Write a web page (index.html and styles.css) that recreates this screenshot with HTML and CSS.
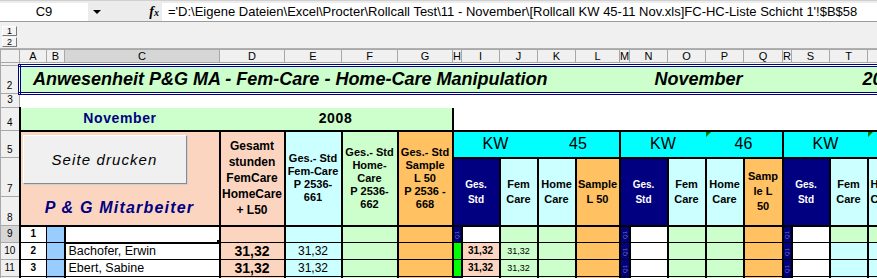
FILE: index.html
```html
<!DOCTYPE html>
<html lang="de">
<head>
  <meta charset="UTF-8" />
  <title>Anwesenheit P&amp;G MA - Rollcall</title>
  <link rel="stylesheet" href="styles.css">
</head>

<body>
  <div class="formula-bar">
    <div class="name-box">C9</div>
    <div class="name-drop">
      <span class="arrow"></span>
      <span class="fx"><i>f</i><small>x</small></span>
    </div>
    <div class="formula">='D:\Eigene Dateien\Excel\Procter\Rollcall Test\11 - November\[Rollcall KW 45-11 Nov.xls]FC-HC-Liste Schicht 1'!$B$58</div>
  </div>

  <div class="outline">
    <span class="level">1</span>
    <span class="level">2</span>
  </div>

  <table class="sheet">
    <colgroup>
      <col class="w-rh"><col class="w-a"><col class="w-b"><col class="w-c">
      <col class="w-d"><col class="w-e"><col class="w-f"><col class="w-g">
      <col class="w-h"><col class="w-i"><col class="w-i"><col class="w-i"><col class="w-l">
      <col class="w-m"><col class="w-i"><col class="w-i"><col class="w-i"><col class="w-q">
      <col class="w-h"><col class="w-i"><col class="w-i"><col class="w-u">
    </colgroup>

    <!-- column letters -->
    <tr class="r-hdr">
      <th class="rh"></th>
      <th class="ch">A</th><th class="ch">B</th><th class="ch sel">C</th><th class="ch">D</th>
      <th class="ch">E</th><th class="ch">F</th><th class="ch">G</th><th class="ch">H</th>
      <th class="ch">I</th><th class="ch">J</th><th class="ch">K</th><th class="ch">L</th>
      <th class="ch">M</th><th class="ch">N</th><th class="ch">O</th><th class="ch">P</th>
      <th class="ch">Q</th><th class="ch">R</th><th class="ch">S</th><th class="ch">T</th>
      <th class="ch">U</th>
    </tr>

    <tr class="r1">
      <th class="rh"></th>
      <td class="w"></td><td class="w"></td><td class="w"></td><td class="w"></td><td class="w"></td>
      <td class="w"></td><td class="w"></td><td class="w"></td><td class="w"></td><td class="w"></td>
      <td class="w"></td><td class="w"></td><td class="w"></td><td class="w"></td><td class="w"></td>
      <td class="w"></td><td class="w"></td><td class="w"></td><td class="w"></td><td class="w"></td>
      <td class="w"></td>
    </tr>

    <!-- title -->
    <tr class="r2">
      <th class="rh">2</th>
      <td class="title first" colspan="13"><span class="t-main">Anwesenheit P&amp;G MA - Fem-Care - Home-Care Manipulation</span></td>
      <td class="title" colspan="5"><span class="t-month">November</span></td>
      <td class="title" colspan="3"><span class="t-year">2008</span></td>
    </tr>

    <tr class="r3">
      <th class="rh">3</th>
      <td class="w"></td><td class="w"></td><td class="w"></td><td class="w"></td><td class="w"></td>
      <td class="w"></td><td class="w"></td><td class="w"></td><td class="w"></td><td class="w"></td>
      <td class="w"></td><td class="w"></td><td class="w"></td><td class="w"></td><td class="w"></td>
      <td class="w"></td><td class="w"></td><td class="w"></td><td class="w"></td><td class="w"></td>
      <td class="w"></td>
    </tr>

    <tr class="r4">
      <th class="rh">4</th>
      <td class="lg month" colspan="3">November</td>
      <td class="lg year" colspan="4">2008</td>
      <td class="w"></td><td class="w"></td><td class="w"></td><td class="w"></td><td class="w"></td>
      <td class="w"></td><td class="w"></td><td class="w"></td><td class="w"></td><td class="w"></td>
      <td class="w"></td><td class="w"></td><td class="w"></td><td class="w"></td>
    </tr>

    <!-- column headings -->
    <tr class="r5">
      <th class="rh">5</th>
      <td class="pe hd staff" colspan="3" rowspan="3">
        <div class="print-btn">Seite drucken</div>
        <div class="team">P &amp; G Mitarbeiter</div>
      </td>
      <td class="pe hd total" rowspan="3">Gesamt<br>stunden<br>FemCare<br>HomeCare<br>+ L50</td>
      <td class="lc hd sum" rowspan="3">Ges.- Std<br>Fem-Care<br>P 2536-<br>661</td>
      <td class="lg hd sum" rowspan="3">Ges.- Std<br>Home-<br>Care<br>P 2536-<br>662</td>
      <td class="or hd sum" rowspan="3">Ges.- Std<br>Sample<br>L 50<br>P 2536 -<br>668</td>
      <td class="cy hd kw" colspan="3">KW</td>
      <td class="cy hd kwn" colspan="2">45</td>
      <td class="cy hd kw" colspan="3">KW</td>
      <td class="cy hd kwn mark" colspan="2"><span class="tri"></span>46</td>
      <td class="cy hd kw" colspan="3">KW</td>
      <td class="cy hd kwn mark"><span class="tri"></span></td>
    </tr>

    <tr class="r7">
      <th class="rh">7</th>
      <td class="nv hd wk" colspan="2" rowspan="2">Ges.<br>Std</td>
      <td class="lc hd wk" rowspan="2">Fem<br>Care</td>
      <td class="lc hd wk" rowspan="2">Home<br>Care</td>
      <td class="or hd wk" rowspan="2">Sample<br>L 50</td>
      <td class="nv hd wk" colspan="2" rowspan="2">Ges.<br>Std</td>
      <td class="lc hd wk" rowspan="2">Fem<br>Care</td>
      <td class="lc hd wk" rowspan="2">Home<br>Care</td>
      <td class="or hd wk" rowspan="2">Samp<br>le L<br>50</td>
      <td class="nv hd wk" colspan="2" rowspan="2">Ges.<br>Std</td>
      <td class="lc hd wk" rowspan="2">Fem<br>Care</td>
      <td class="lc hd wk left" rowspan="2">Home<br>Care</td>
    </tr>

    <tr class="r8">
      <th class="rh">8</th>
    </tr>

    <!-- staff rows -->
    <tr class="data">
      <th class="rh sel">9</th>
      <td class="num">1</td>
      <td class="pb idx"></td>
      <td class="name active"><span class="handle"></span></td>
      <td class="pe"></td>
      <td class="lc"></td>
      <td class="lg"></td>
      <td class="or"></td>
      <td class="nv"><span class="tiny">Q1</span></td>
      <td class="white"></td>
      <td class="lg"></td><td class="lg"></td><td class="or"></td>
      <td class="nv"><span class="tiny">Q1</span></td>
      <td class="white"></td>
      <td class="lg"></td><td class="lg"></td><td class="or"></td>
      <td class="nv"><span class="tiny">Q1</span></td>
      <td class="white"></td>
      <td class="lg"></td><td class="lg"></td>
    </tr>

    <tr class="data">
      <th class="rh">10</th>
      <td class="num">2</td>
      <td class="pb idx"></td>
      <td class="name">Bachofer, Erwin</td>
      <td class="pe big">31,32</td>
      <td class="lc val">31,32</td>
      <td class="lg"></td>
      <td class="or"></td>
      <td class="gr"></td>
      <td class="pe small-b">31,32</td>
      <td class="lg small">31,32</td>
      <td class="lg"></td><td class="or"></td>
      <td class="nv"><span class="tiny">Q1</span></td>
      <td class="white"></td>
      <td class="lg"></td><td class="lg"></td><td class="or"></td>
      <td class="nv"><span class="tiny">Q1</span></td>
      <td class="white"></td>
      <td class="lc"></td><td class="lc"></td>
    </tr>

    <tr class="data">
      <th class="rh">11</th>
      <td class="num">3</td>
      <td class="pb idx"></td>
      <td class="name">Ebert, Sabine</td>
      <td class="pe big">31,32</td>
      <td class="lc val">31,32</td>
      <td class="lg"></td>
      <td class="or"></td>
      <td class="gr"></td>
      <td class="pe small-b">31,32</td>
      <td class="lg small">31,32</td>
      <td class="lg"></td><td class="or"></td>
      <td class="nv"><span class="tiny">Q1</span></td>
      <td class="white"></td>
      <td class="lg"></td><td class="lg"></td><td class="or"></td>
      <td class="nv"><span class="tiny">Q1</span></td>
      <td class="white"></td>
      <td class="lc"></td><td class="lc"></td>
    </tr>

    <tr class="data">
      <th class="rh">12</th>
      <td class="num">4</td>
      <td class="pb idx"></td>
      <td class="name"></td>
      <td class="pe"></td>
      <td class="lc"></td>
      <td class="lg"></td>
      <td class="or"></td>
      <td class="nv"></td>
      <td class="white"></td>
      <td class="lg"></td><td class="lg"></td><td class="or"></td>
      <td class="nv"></td>
      <td class="white"></td>
      <td class="lg"></td><td class="lg"></td><td class="or"></td>
      <td class="nv"></td>
      <td class="white"></td>
      <td class="lc"></td><td class="lc"></td>
    </tr>
  </table>
</body>
</html>
```

FILE: styles.css
```css
* {
  box-sizing: border-box;
}

body {
  margin: 0;
  width: 877px;
  height: 278px;
  overflow: hidden;
  font-family: "Liberation Sans", Arial, sans-serif;
  background-color: #fff;
  color: #000;
}

/* formula bar */

.formula-bar {
  display: flex;
  height: 22px;
  padding-top: 2px;
  background-color: #ececec;
  border-top: 1px solid #d0d0d0;
  border-bottom: 1px solid #9c9c9c;
}

.name-box {
  width: 88px;
  background-color: #fff;
  font-size: 13px;
  line-height: 18px;
  text-align: center;
}

.name-drop {
  width: 74px;
  display: flex;
  align-items: center;
  padding-left: 5px;
}

.arrow {
  width: 0;
  height: 0;
  border-left: 4px solid transparent;
  border-right: 4px solid transparent;
  border-top: 4px solid #000;
}

.fx {
  margin-left: auto;
  margin-right: 3px;
  font-family: "Liberation Serif", serif;
  font-size: 14px;
  font-weight: bold;
}

.fx small {
  font-size: 10px;
  font-style: italic;
}

.formula {
  flex: 1;
  background-color: #fff;
  padding-left: 6px;
  font-size: 13px;
  line-height: 18px;
  white-space: nowrap;
  overflow: hidden;
}

/* outline gutter */

.outline {
  height: 27px;
  padding: 4px 0 0 2px;
  background-color: #f0f0f0;
  border-bottom: 1px solid #b0b0b0;
}

.level {
  display: block;
  width: 15px;
  height: 10px;
  margin-bottom: 1px;
  font-size: 9px;
  line-height: 9px;
  text-align: center;
  background-color: #f4f4f4;
  border: 1px solid;
  border-color: #fff #7a7a7a #7a7a7a #fff;
}

/* sheet */

.sheet {
  border-collapse: collapse;
  table-layout: fixed;
  width: 927px;
  line-height: 1.15;
}

.sheet td,
.sheet th {
  padding: 0;
  border: none;
  overflow: hidden;
  white-space: nowrap;
  text-align: center;
  vertical-align: middle;
}

.sheet th {
  font-weight: normal;
}

.w-rh { width: 19px; }
.w-a { width: 27px; }
.w-b { width: 18px; }
.w-c { width: 155px; }
.w-d { width: 65px; }
.w-e { width: 57px; }
.w-f { width: 56px; }
.w-g { width: 55px; }
.w-h { width: 9px; }
.w-i { width: 38px; }
.w-l { width: 44px; }
.w-m { width: 10px; }
.w-q { width: 39px; }
.w-u { width: 60px; }

.r-hdr { height: 13px; }
.r1 { height: 3px; }
.r2 { height: 28px; }
.r3 { height: 14px; }
.r4 { height: 23px; }
.r5 { height: 27px; }
.r7 { height: 39px; }
.r8 { height: 29px; }
.data { height: 17px; }

.sheet th.ch {
  font-size: 11px;
  line-height: 11px;
  background-color: #f0f0f0;
  border: 1px solid #a8a8a8;
}

.sheet th.rh {
  font-size: 10px;
  line-height: 10px;
  vertical-align: bottom;
  padding-bottom: 2px;
  background-color: #f0f0f0;
  border: 1px solid #a8a8a8;
}

.data th.rh {
  vertical-align: middle;
  padding-bottom: 0;
}

.r1 th.rh {
  padding: 0;
}

.sheet th.sel {
  background-color: #d6d6d6;
}

/* fills */

.w {
  border: 1px solid #c0c0c0;
}

.white { background-color: #fff; }
.pe { background-color: #fcd5c1; }
.lg { background-color: #ccffcc; }
.lc { background-color: #ccffff; }
.or { background-color: #ffc162; }
.nv { background-color: #000080; color: #fff; }
.cy { background-color: #00ffff; }
.gr { background-color: #00ff00; }
.pb { background-color: #99ccff; }

/* title row */

.sheet td.title {
  background-color: #ccffcc;
  border-top: 3px double #000080;
  border-bottom: 3px double #000080;
  text-align: left;
  font-weight: bold;
  font-style: italic;
  font-size: 18px;
}

.sheet td.first {
  border-left: 3px double #000080;
}

.t-main { padding-left: 12px; }
.t-month { padding-left: 25px; }
.t-year { padding-left: 71px; }

/* month row */

.month,
.year {
  font-size: 14px;
  font-weight: bold;
  letter-spacing: 0.6px;
  border-top: 2px solid #000;
  border-bottom: 2px solid #000;
}

.sheet td.month {
  color: #000080;
  border-left: 2px solid #000;
}

.sheet td.year {
  border-right: 2px solid #000;
}

/* heading block */

.sheet td.hd {
  border: 2px solid #000;
  font-weight: bold;
}

.sheet td.staff {
  vertical-align: top;
}

.print-btn {
  width: 164px;
  height: 49px;
  margin: 3px 0 0 2px;
  background-color: #f0f0f0;
  border: 1px solid;
  border-color: #fff #8a8a8a #8a8a8a #fff;
  box-shadow: 1px 1px 0 #d0d0d0;
  font-style: italic;
  font-weight: normal;
  font-size: 15px;
  letter-spacing: 1.1px;
  line-height: 47px;
  text-align: center;
}

.team {
  margin-top: 14px;
  color: #000080;
  font-style: italic;
  font-weight: bold;
  font-size: 16px;
  letter-spacing: 1.2px;
  line-height: 20px;
}

.total {
  font-size: 12px;
  line-height: 16px;
}

.sum {
  font-size: 11px;
  line-height: 13px;
}

.sheet td.kw {
  border-right: none;
  font-weight: normal;
  font-size: 16px;
}

.sheet td.kwn {
  border-left: none;
  font-weight: normal;
  font-size: 16px;
}

.mark {
  position: relative;
}

.tri {
  position: absolute;
  top: 0;
  left: 0;
  border-top: 5px solid #008000;
  border-right: 5px solid transparent;
}

.wk {
  font-size: 11px;
  line-height: 15px;
}

.nv.wk {
  font-size: 10px;
}

.sheet td.left {
  text-align: left;
  padding-left: 2px;
}

/* staff rows */

.data td {
  border: 1px solid #000;
  border-left-width: 2px;
  border-right-width: 2px;
  line-height: 14px;
}

.data td.num {
  border-right-width: 1px;
  font-size: 10px;
  font-weight: bold;
}

.data td.idx {
  border-left-width: 1px;
}

.sheet td.name {
  text-align: left;
  padding-left: 3px;
  font-size: 12.5px;
}

.active {
  position: relative;
}

.data td.active {
  border-top-width: 2px;
  border-bottom-width: 2px;
}

.handle {
  position: absolute;
  right: -3px;
  bottom: -3px;
  width: 6px;
  height: 6px;
  background-color: #000;
  border: 1px solid #fff;
}

.big {
  font-size: 14px;
  font-weight: bold;
}

.val {
  font-size: 12px;
}

.small-b {
  font-size: 10px;
  font-weight: bold;
}

.small {
  font-size: 9px;
}

.tiny {
  display: inline-block;
  writing-mode: vertical-rl;
  transform: rotate(180deg);
  font-size: 6px;
  line-height: 6px;
  color: #7a7aa8;
}
```
